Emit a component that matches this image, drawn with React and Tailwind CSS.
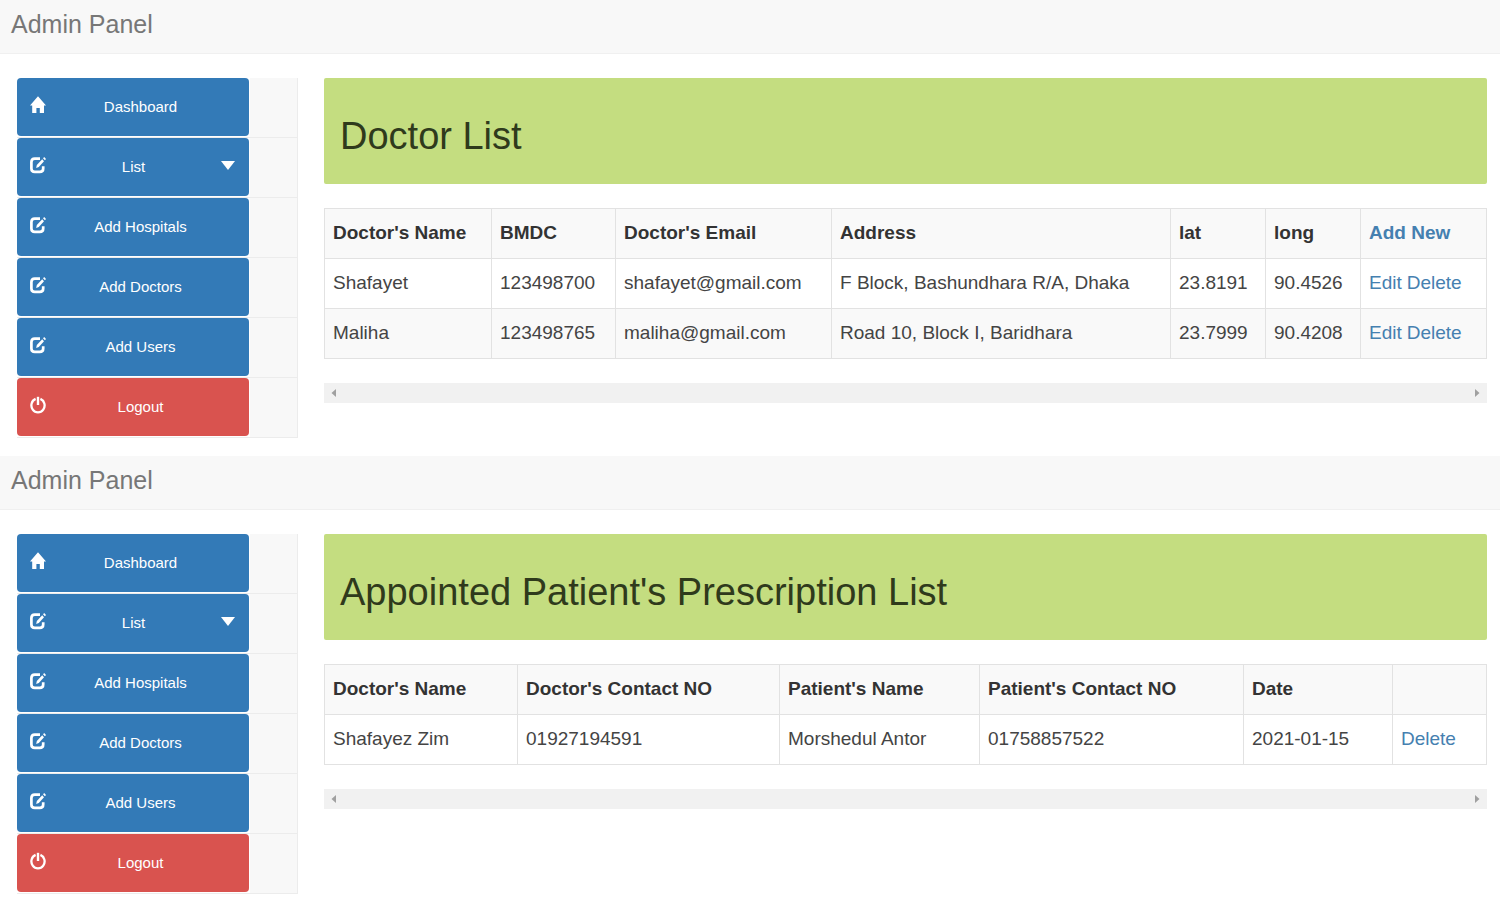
import React from "react";

function HomeIcon() {
  return (
    <svg viewBox="0 0 16 18" className="h-[18px] w-4 shrink-0" fill="currentColor" aria-hidden="true">
      <path d="M8 0.2 L16 9.4 H14 V17 H9.8 V12 H6.4 V17 H2.2 V9.4 H0 Z" />
    </svg>
  );
}

function EditIcon() {
  return (
    <svg viewBox="0 0 16 18" className="h-[18px] w-4 shrink-0" fill="none" aria-hidden="true">
      <path
        d="M10 2.6 H4.8 Q1.4 2.6 1.4 6 V12.4 Q1.4 15.8 4.8 15.8 H9.8 Q13.2 15.8 13.2 12.4 V10.2"
        stroke="currentColor"
        strokeWidth="2.7"
      />
      <path d="M6.2 11.9 L6.8 9 L12.2 3.2 L14 5.2 L8.8 11 Z" fill="currentColor" />
      <path d="M13 2.2 L14.2 0.9 L16 2.9 L14.9 4.3 Z" fill="currentColor" />
    </svg>
  );
}

function PowerIcon() {
  return (
    <svg viewBox="0 0 16 18" className="h-[18px] w-4 shrink-0" fill="none" stroke="currentColor" aria-hidden="true">
      <path d="M5.6 2.9 A6.6 7 0 1 0 10.4 2.9" strokeWidth="2.3" />
      <path d="M8 0.8 V9" strokeWidth="2.4" />
    </svg>
  );
}

function CaretIcon() {
  return (
    <svg viewBox="0 0 14 9" className="h-[9px] w-[14px] shrink-0" fill="currentColor" aria-hidden="true">
      <path d="M0 0 H14 L7 9 Z" />
    </svg>
  );
}

const menu = [
  { label: "Dashboard", Icon: HomeIcon },
  { label: "List", Icon: EditIcon, caret: true },
  { label: "Add Hospitals", Icon: EditIcon },
  { label: "Add Doctors", Icon: EditIcon },
  { label: "Add Users", Icon: EditIcon },
  { label: "Logout", Icon: PowerIcon, danger: true },
];

function Sidebar() {
  return (
    <ul className="w-[281px] shrink-0 border-r border-[#ececec] bg-[#f8f8f8]">
      {menu.map(({ label, Icon, caret, danger }) => (
        <li key={label} className="flex h-[60px] border-b border-[#ececec] bg-[linear-gradient(to_right,white_233px,transparent_233px)]">
          <button
            type="button"
            className={`flex h-[58px] w-[232px] items-center rounded pr-[14px] pl-[13px] text-[15px] leading-5 text-white ${
              danger ? "bg-[#d9534f]" : "bg-[#337ab7]"
            }`}
          >
            <span className="pb-1">
              <Icon />
            </span>
            <span className="flex-1 text-center">{label}</span>
            {caret && (
              <span className="pb-1">
                <CaretIcon />
              </span>
            )}
          </button>
        </li>
      ))}
    </ul>
  );
}

function ScrollBar() {
  return (
    <div className="mt-6 flex h-5 items-center justify-between bg-[#f1f1f1] px-[7px] text-[#a0a0a0]">
      <button type="button" aria-label="Scroll left">
        <svg viewBox="0 0 5 8" className="h-2 w-[5px]" fill="currentColor" aria-hidden="true">
          <path d="M5 0 V8 L0.5 4 Z" />
        </svg>
      </button>
      <button type="button" aria-label="Scroll right">
        <svg viewBox="0 0 5 8" className="h-2 w-[5px]" fill="currentColor" aria-hidden="true">
          <path d="M0 0 V8 L4.5 4 Z" />
        </svg>
      </button>
    </div>
  );
}

function Cell({ value }) {
  if (!Array.isArray(value)) return value;
  return (
    <span className="flex gap-[5px]">
      {value.map((text) => (
        <a key={text} href="#" className="text-[#4580b0]">
          {text}
        </a>
      ))}
    </span>
  );
}

function DataTable({ columns, rows }) {
  return (
    <table className="mt-6 w-full table-fixed border-collapse text-left text-[19px] leading-6 text-[#444]">
      <thead>
        <tr className="bg-[#f9f9f9] text-[#333]">
          {columns.map(({ title, width }, i) => (
            <th key={i} className={`h-[50px] border border-[#e2e2e2] px-2 pt-3 pb-[13px] font-bold ${width}`}>
              <Cell value={title} />
            </th>
          ))}
        </tr>
      </thead>
      <tbody>
        {rows.map((row, r) => (
          <tr key={r} className="even:bg-[#f9f9f9]">
            {row.map((value, i) => (
              <td key={i} className="border border-[#e2e2e2] px-2 pt-3 pb-[13px] whitespace-nowrap">
                <Cell value={value} />
              </td>
            ))}
          </tr>
        ))}
      </tbody>
    </table>
  );
}

function Panel({ title, columns, rows }) {
  return (
    <section className="pb-[18px] last:pb-2">
      <header className="flex h-[54px] items-center border-b border-[#f0f0f0] bg-[#f8f8f8] px-[11px] pb-1.5">
        <a href="#" className="text-[25px] leading-8 text-[#777]">
          Admin Panel
        </a>
      </header>
      <div className="flex gap-[26px] pt-6 pr-[13px] pl-[17px]">
        <Sidebar />
        <main className="min-w-0 flex-1">
          <h1 className="rounded-xs bg-[#c4dd80] pt-9 pr-4 pb-[26px] pl-4 text-[38px] leading-[44px] text-[#2f3a1c]">
            {title}
          </h1>
          <DataTable columns={columns} rows={rows} />
          <ScrollBar />
        </main>
      </div>
    </section>
  );
}

const doctorColumns = [
  { title: "Doctor's Name", width: "w-[167px]" },
  { title: "BMDC", width: "w-[124px]" },
  { title: "Doctor's Email", width: "w-[216px]" },
  { title: "Address", width: "w-auto" },
  { title: "lat", width: "w-[95px]" },
  { title: "long", width: "w-[95px]" },
  { title: ["Add New"], width: "w-[126px]" },
];

const doctorRows = [
  ["Shafayet", "123498700", "shafayet@gmail.com", "F Block, Bashundhara R/A, Dhaka", "23.8191", "90.4526", ["Edit", "Delete"]],
  ["Maliha", "123498765", "maliha@gmail.com", "Road 10, Block I, Baridhara", "23.7999", "90.4208", ["Edit", "Delete"]],
];

const prescriptionColumns = [
  { title: "Doctor's Name", width: "w-[193px]" },
  { title: "Doctor's Contact NO", width: "w-auto" },
  { title: "Patient's Name", width: "w-[200px]" },
  { title: "Patient's Contact NO", width: "w-[264px]" },
  { title: "Date", width: "w-[149px]" },
  { title: "", width: "w-[94px]" },
];

const prescriptionRows = [
  ["Shafayez Zim", "01927194591", "Morshedul Antor", "01758857522", "2021-01-15", ["Delete"]],
];

export default function App() {
  return (
    <div className="min-h-screen bg-white font-['Liberation_Sans',Arial,sans-serif]">
      <Panel title="Doctor List" columns={doctorColumns} rows={doctorRows} />
      <Panel title="Appointed Patient's Prescription List" columns={prescriptionColumns} rows={prescriptionRows} />
    </div>
  );
}
